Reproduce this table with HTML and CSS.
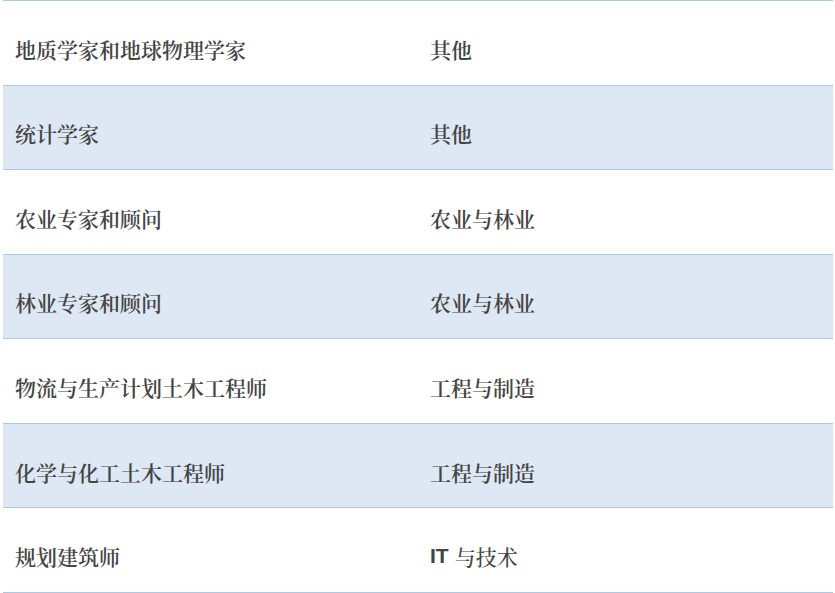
FILE: index.html
```html
<!DOCTYPE html>
<html lang="zh">
<head>
<meta charset="utf-8">
<link rel="stylesheet" href="styles.css">
</head>
<body>
<div class="table">
  <div class="row"><div class="cell">地质学家和地球物理学家</div><div class="cell">其他</div></div>
  <div class="row alt"><div class="cell">统计学家</div><div class="cell">其他</div></div>
  <div class="row"><div class="cell">农业专家和顾问</div><div class="cell">农业与林业</div></div>
  <div class="row alt"><div class="cell">林业专家和顾问</div><div class="cell">农业与林业</div></div>
  <div class="row"><div class="cell">物流与生产计划土木工程师</div><div class="cell">工程与制造</div></div>
  <div class="row alt"><div class="cell">化学与化工土木工程师</div><div class="cell">工程与制造</div></div>
  <div class="row"><div class="cell">规划建筑师</div><div class="cell mixed"><span class="latin">IT</span> 与技术</div></div>
</div>
</body>
</html>
```
FILE: styles.css
```css
html, body {
  margin: 0;
  padding: 0;
  background: #ffffff;
}
.table {
  margin-left: 3px;
  width: 830px;
  border-top: 1px solid #a9c9e9;
}
.row {
  display: flex;
  height: 83.57px;
  border-bottom: 1px solid #a9c9e9;
  background: #ffffff;
}
.row.alt {
  background: #dde8f4;
}
.cell {
  flex: 1 1 0;
  display: flex;
  align-items: center;
  padding: 12px 12px 0;
  font-family: "Noto Serif CJK SC", "Noto Sans CJK SC", serif;
  font-size: 21px;
  font-weight: 600;
  color: #444444;
  white-space: nowrap;
}
.cell.mixed {
  font-weight: 500;
}
.latin {
  font-family: "Liberation Sans", Arial, sans-serif;
  font-weight: 700;
  margin-right: 6px;
}
```
